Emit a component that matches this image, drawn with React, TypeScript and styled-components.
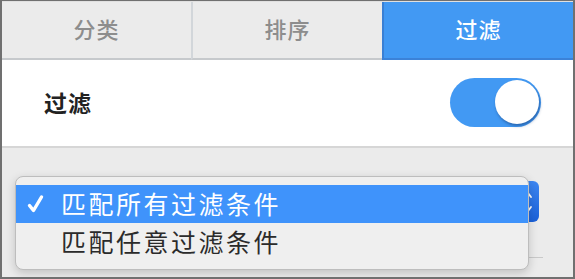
import React, { useState } from 'react'
import styled, { createGlobalStyle } from 'styled-components'

const GlobalStyle = createGlobalStyle`
  html, body {
    margin: 0;
    padding: 0;
    background: #ebebeb;
  }

  * {
    box-sizing: border-box;
  }
`

const FONT = `"Noto Sans CJK SC", "Noto Sans", sans-serif`
const BLUE = '#4299f3'

const tabs = ['分类', '排序', '过滤']
const options = ['匹配所有过滤条件', '匹配任意过滤条件']

const App = (): JSX.Element => {
  const [active, setActive] = useState(2)
  const [enabled, setEnabled] = useState(true)
  const [choice, setChoice] = useState(0)

  return (
    <>
      <GlobalStyle />
      <Frame>
        <TabBar>
          {tabs.map((t, i) => (
            <Tab key={t} $active={i === active} onClick={() => setActive(i)}>
              {t}
            </Tab>
          ))}
        </TabBar>

        <FilterRow>
          <Label>过滤</Label>
          <Switch $on={enabled} onClick={() => setEnabled(!enabled)}>
            <Knob $on={enabled} />
          </Switch>
        </FilterRow>

        <SelectArea>
          <SelectRow>
            <SelectBox />
            <Stepper>
              <svg width="10" height="26" viewBox="0 0 10 26">
                <path d="M2 8 L5 4 L8 8" fill="none" stroke="#fff" strokeWidth="1.8" strokeLinecap="round" />
                <path d="M2 18 L5 22 L8 18" fill="none" stroke="#fff" strokeWidth="1.8" strokeLinecap="round" />
              </svg>
            </Stepper>
          </SelectRow>
          <Underline />

          <Menu>
            {options.map((o, i) => (
              <MenuItem key={o} $selected={i === choice} onClick={() => setChoice(i)}>
                <Check>
                  {i === choice && (
                    <svg width="17" height="20" viewBox="0 0 17 20">
                      <path d="M2.5 11.5 L6.5 16.5 L14.5 3" fill="none" stroke="#fff" strokeWidth="3.4" strokeLinecap="round" strokeLinejoin="round" />
                    </svg>
                  )}
                </Check>
                {o}
              </MenuItem>
            ))}
          </Menu>
        </SelectArea>
      </Frame>
    </>
  )
}

export default App

const Frame = styled.div`
  width: 575px;
  height: 279px;
  border: 2px solid #707070;
  border-top-width: 1px;
  background: #ebebeb;
  display: flex;
  flex-direction: column;
  overflow: hidden;
  font-family: ${FONT};
`

const TabBar = styled.div`
  display: flex;
  height: 59px;
  border-top: 1px solid #e0e0e0;
`

const Tab = styled.div<{ $active: boolean }>`
  flex: 1;
  display: flex;
  align-items: center;
  justify-content: center;
  padding-bottom: 4px;
  font-size: 22px;
  font-weight: 500;
  letter-spacing: 1px;
  cursor: pointer;
  color: ${({ $active }) => ($active ? '#fff' : '#8d8d8d')};
  background: ${({ $active }) => ($active ? BLUE : '#ebebeb')};
  border-bottom: 2px solid ${({ $active }) => ($active ? '#3b82d8' : '#c6c9cc')};
  border-left: 2px solid ${({ $active }) => ($active ? '#3a80d4' : '#d2d6da')};

  &:first-child {
    border-left: none;
  }
`

const FilterRow = styled.div`
  height: 88px;
  background: #fff;
  border-bottom: 2px solid #d6d6d6;
  display: flex;
  align-items: center;
  justify-content: space-between;
  padding: 0 32px 2px 42px;
`

const Label = styled.div`
  font-size: 23px;
  font-weight: 700;
  color: #222;
  letter-spacing: 1px;
`

const Switch = styled.div<{ $on: boolean }>`
  position: relative;
  width: 91px;
  height: 49px;
  border-radius: 25px;
  background: ${({ $on }) => ($on ? BLUE : '#d9d9d9')};
  cursor: pointer;
`

const Knob = styled.div<{ $on: boolean }>`
  position: absolute;
  top: 2px;
  left: ${({ $on }) => ($on ? '45px' : '2px')};
  width: 44px;
  height: 44px;
  border-radius: 50%;
  background: #fff;
  box-shadow: 1px 2px 3px rgba(20, 60, 120, 0.55);
`

const SelectArea = styled.div`
  position: relative;
  flex: 1;
  padding: 33px 34px 0 13px;
`

const SelectRow = styled.div`
  display: flex;
  height: 41px;
`

const SelectBox = styled.div`
  flex: 1;
  background: #f7f7f7;
  border-radius: 6px 0 0 6px;
`

const Stepper = styled.div`
  width: 22px;
  display: flex;
  align-items: center;
  justify-content: center;
  border-radius: 0 6px 6px 0;
  background: linear-gradient(#3d87f2, #1a60d8);
`

const Underline = styled.div`
  margin: 35px -4px 0 0;
  height: 1px;
  background: #c9c9c9;
`

const Menu = styled.div`
  position: absolute;
  top: 28px;
  left: 13px;
  width: 514px;
  height: 94px;
  padding: 8px 0 9px;
  background: #efefef;
  border: 1px solid #bdbdbd;
  border-radius: 8px;
  box-shadow: 0 3px 10px rgba(0, 0, 0, 0.18);
  overflow: hidden;
`

const MenuItem = styled.div<{ $selected: boolean }>`
  display: flex;
  align-items: center;
  height: 38px;
  padding-bottom: 2px;
  font-size: 25px;
  letter-spacing: 2.5px;
  color: ${({ $selected }) => ($selected ? '#fff' : '#2b2b2b')};
  background: ${({ $selected }) => ($selected ? '#3f93fb' : 'transparent')};
  cursor: default;
`

const Check = styled.span`
  width: 45px;
  display: flex;
  justify-content: flex-start;
  padding: 2px 0 0 11px;
`
